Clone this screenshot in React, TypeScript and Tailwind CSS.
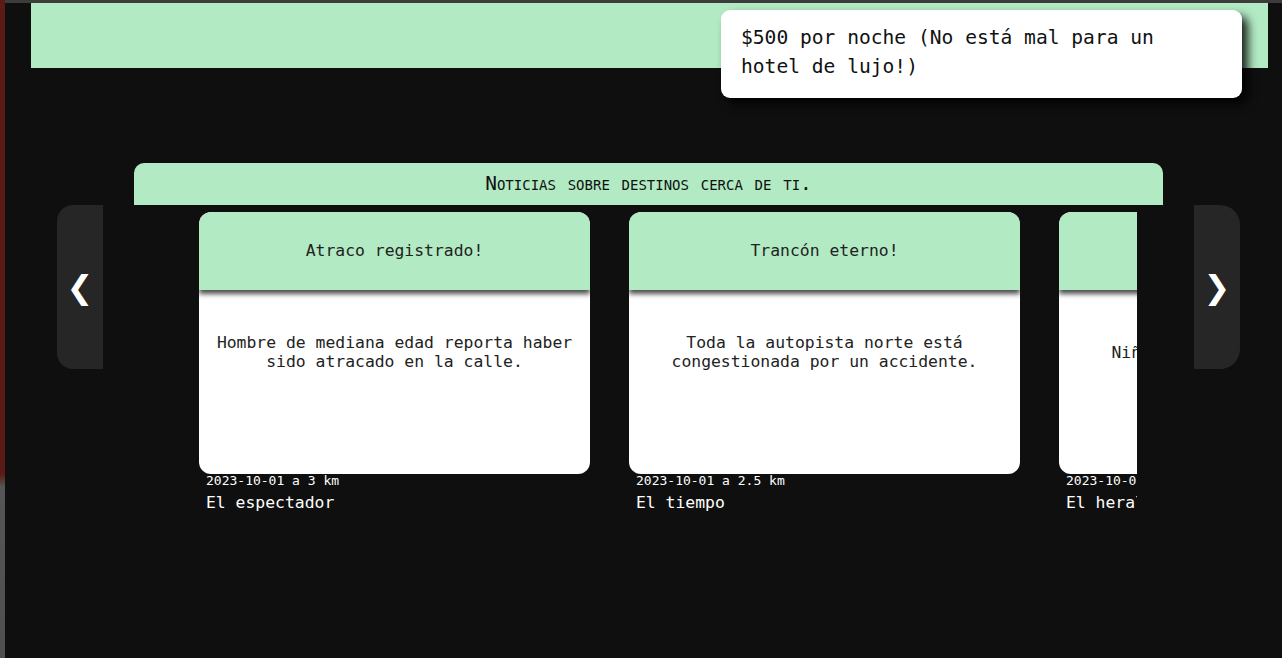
const mono = "font-['DejaVu_Sans_Mono',monospace]";

interface News {
  title: string;
  body: string;
  date: string;
  source: string;
}

const news: News[] = [
  {
    title: 'Atraco registrado!',
    body: 'Hombre de mediana edad reporta haber sido atracado en la calle.',
    date: '2023-10-01 a 3 km',
    source: 'El espectador',
  },
  {
    title: 'Trancón eterno!',
    body: 'Toda la autopista norte está congestionada por un accidente.',
    date: '2023-10-01 a 2.5 km',
    source: 'El tiempo',
  },
  {
    title: 'Niño extraviado!',
    body: 'Niño perdido en parque local.',
    date: '2023-10-01 a 4 km',
    source: 'El heraldo',
  },
];

const NewsCard = ({ item }: { item: News }) => (
  <div className="w-[391px] shrink-0">
    <div className="h-[262px] bg-white rounded-[12px] flex flex-col overflow-hidden">
      <div className="h-[78px] shrink-0 bg-[#b2eac3] rounded-t-[12px] flex items-center justify-center text-[16.4px] text-[#222] relative z-10 shadow-[0_4px_5px_rgba(0,0,0,0.7)]">
        {item.title}
      </div>
      <div className="h-[124px] flex items-center justify-center px-[16px] text-center text-[16.4px] leading-[19px] text-[#222]">
        {item.body}
      </div>
    </div>
    <div className="pl-[7px] -mt-[1px] text-[13px] leading-[15px] text-white whitespace-nowrap">{item.date}</div>
    <div className="pl-[7px] mt-[5px] text-[16.4px] leading-[19px] text-white whitespace-nowrap">{item.source}</div>
  </div>
);

export default function App() {
  return (
    <div className={`flex h-[658px] w-[1282px] overflow-hidden ${mono}`}>
      {/* page behind */}
      <div className="w-[5px] shrink-0 bg-[linear-gradient(to_bottom,#5a1a15_0%,#5a1a15_72%,#555_74%,#4f4f4f_100%)]" />

      <div className="flex-1 bg-[#0f0f0f] border-t-[3px] border-[#3c3c3c] relative">
        {/* top banner */}
        <div className="ml-[26px] w-[1237px] h-[65px] bg-[#b2eac3]" />

        {/* price tooltip */}
        <div className="absolute left-[716px] top-[7px] w-[521px] h-[88px] bg-white rounded-[9px] px-[20px] pt-[13px] text-[19.6px] leading-[29px] text-[#111] shadow-[6px_6px_10px_rgba(0,0,0,0.85)]">
          $500 por noche (No está mal para un hotel de lujo!)
        </div>

        {/* section header */}
        <div className="ml-[129px] mt-[95px] w-[1029px] h-[42px] bg-[#b2eac3] rounded-t-[10px] flex items-center justify-center text-[19.5px] text-[#111] [font-variant:small-caps]">
          Noticias sobre destinos cerca de ti.
        </div>

        {/* carousel */}
        <div className="flex ml-[52px]">
          <button className="w-[46px] h-[164px] shrink-0 bg-[#262626] rounded-l-[16px] text-white text-[32px] font-['DejaVu_Sans',sans-serif] flex items-center justify-center">
            ❮
          </button>
          <div className="ml-[31px] w-[1003px] overflow-hidden">
            <div className="flex gap-[39px] pl-[65px] pt-[7px]">
              {news.map((n, i) => (
                <NewsCard key={i} item={n} />
              ))}
            </div>
          </div>
          <button className="ml-[57px] w-[46px] h-[164px] shrink-0 bg-[#262626] rounded-r-[20px] text-white text-[32px] font-['DejaVu_Sans',sans-serif] flex items-center justify-center">
            ❯
          </button>
        </div>
      </div>
    </div>
  );
}
